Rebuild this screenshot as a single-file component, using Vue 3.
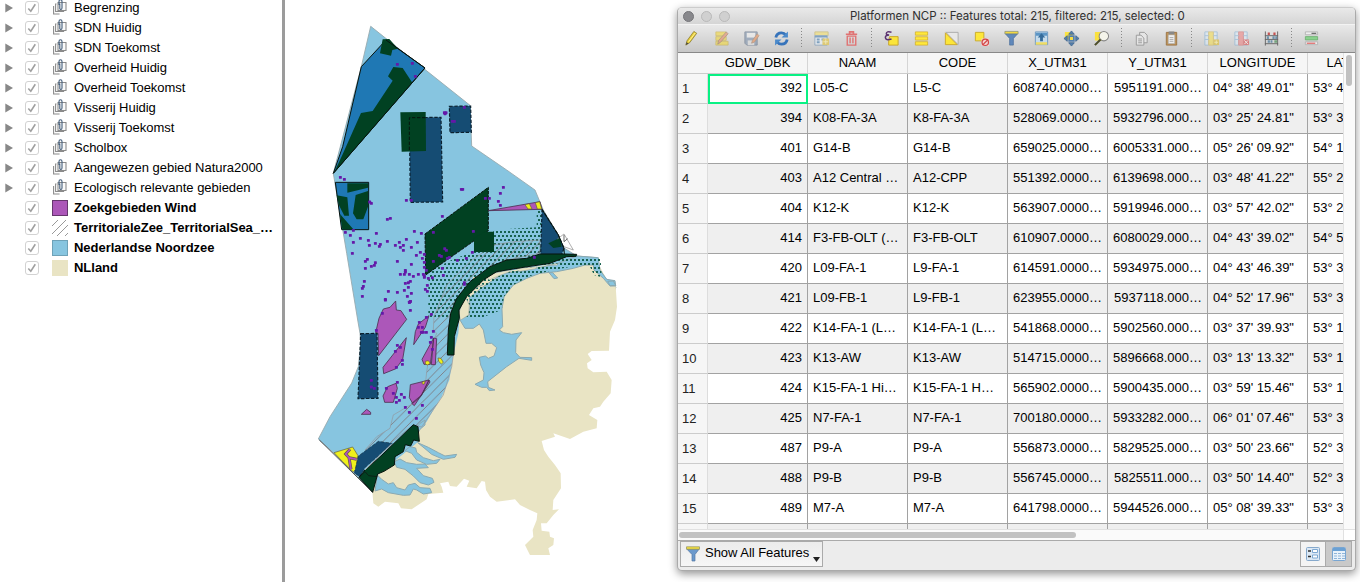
<script setup>
const layers = [
  'Begrenzing', 'SDN Huidig', 'SDN Toekomst', 'Overheid Huidig', 'Overheid Toekomst',
  'Visserij Huidig', 'Visserij Toekomst', 'Scholbox', 'Aangewezen gebied Natura2000',
  'Ecologisch relevante gebieden',
].map((name) => ({ name, group: true })).concat([
  { name: 'Zoekgebieden Wind', swatch: 'wind' },
  { name: 'TerritorialeZee_TerritorialSea_…', swatch: 'territory' },
  { name: 'Nederlandse Noordzee', swatch: 'sea' },
  { name: 'NLland', swatch: 'land' },
])

const columns = ['GDW_DBK', 'NAAM', 'CODE', 'X_UTM31', 'Y_UTM31', 'LONGITUDE', 'LATITUDE']
const rows = [
  ['392', 'L05-C', 'L5-C', '608740.0000…', '5951191.000…', '04° 38\' 49.01"', '53° 4'],
  ['394', 'K08-FA-3A', 'K8-FA-3A', '528069.0000…', '5932796.000…', '03° 25\' 24.81"', '53° 3'],
  ['401', 'G14-B', 'G14-B', '659025.0000…', '6005331.000…', '05° 26\' 09.92"', '54° 1'],
  ['403', 'A12 Central …', 'A12-CPP', '551392.0000…', '6139698.000…', '03° 48\' 41.22"', '55° 2'],
  ['404', 'K12-K', 'K12-K', '563907.0000…', '5919946.000…', '03° 57\' 42.02"', '53° 2'],
  ['414', 'F3-FB-OLT (…', 'F3-FB-OLT', '610907.0000…', '6080029.000…', '04° 43\' 39.02"', '54° 5'],
  ['420', 'L09-FA-1', 'L9-FA-1', '614591.0000…', '5934975.000…', '04° 43\' 46.39"', '53° 3'],
  ['421', 'L09-FB-1', 'L9-FB-1', '623955.0000…', '5937118.000…', '04° 52\' 17.96"', '53° 3'],
  ['422', 'K14-FA-1 (L…', 'K14-FA-1 (L…', '541868.0000…', '5902560.000…', '03° 37\' 39.93"', '53° 1'],
  ['423', 'K13-AW', 'K13-AW', '514715.0000…', '5896668.000…', '03° 13\' 13.32"', '53° 1'],
  ['424', 'K15-FA-1 Hi…', 'K15-FA-1 H…', '565902.0000…', '5900435.000…', '03° 59\' 15.46"', '53° 1'],
  ['425', 'N7-FA-1', 'N7-FA-1', '700180.0000…', '5933282.000…', '06° 01\' 07.46"', '53° 3'],
  ['487', 'P9-A', 'P9-A', '556873.0000…', '5829525.000…', '03° 50\' 23.66"', '52° 3'],
  ['488', 'P9-B', 'P9-B', '556745.0000…', '5825511.000…', '03° 50\' 14.40"', '52° 3'],
  ['489', 'M7-A', 'M7-A', '641798.0000…', '5944526.000…', '05° 08\' 39.33"', '53° 3'],
  ['', '', '', '', '', '', ''],
]

// Platform positions, grouped per map sheet: [sheet x, sheet y, pairs in 1/3 px]
const sheets = [
  [310, 20, [262, 133, 307, 130, 316, 169, 403, 278, 408, 278, 405, 281, 463, 262, 427, 304, 433, 304]],
  [310, 170, [91, 22, 103, 28, 179, 96, 184, 100, 289, 91, 304, 91, 454, 58, 458, 58, 526, 85, 538, 85, 397, 139,
    232, 148, 241, 145, 130, 181, 106, 187, 121, 196, 151, 205, 130, 217, 199, 190, 175, 211, 178, 226, 196, 220,
    211, 223, 208, 229, 232, 214, 256, 226, 268, 217, 271, 232, 280, 226, 280, 241, 289, 208, 313, 184, 334, 190,
    370, 187, 322, 217, 304, 232, 490, 184, 127, 250, 172, 268, 166, 274, 166, 295, 184, 289, 193, 286, 196, 278,
    262, 274, 319, 256, 331, 247, 337, 265, 343, 253, 304, 283, 343, 277, 343, 292, 370, 274, 388, 256, 394, 259,
    404, 236, 409, 241, 412, 265, 418, 262, 442, 271, 469, 265, 487, 247, 397, 295, 400, 316, 286, 301, 286, 306,
    271, 313, 283, 313, 298, 313, 310, 319, 325, 313, 340, 313, 343, 318, 355, 325, 367, 323, 349, 301, 343, 322,
    163, 334, 160, 349, 157, 355, 157, 379, 235, 364, 226, 388, 262, 367, 283, 361, 286, 340, 295, 338, 301, 334,
    295, 352, 304, 370, 292, 379, 298, 397, 301, 394, 301, 421, 352, 346, 346, 358, 352, 364, 349, 442, 364, 433,
    463, 338, 463, 343, 217, 430]],
  [430, 170, [220, 52, 211, 70, 205, 94, 211, 106, 313, 262]],
  [310, 300, [298, 7, 301, 4, 226, 0, 199, 91, 328, 67, 325, 82, 337, 82, 334, 97, 340, 97, 349, 97, 370, 94, 364, 112,
    361, 127, 367, 148, 262, 136, 271, 142, 256, 154, 277, 181, 277, 193, 259, 202, 262, 247, 229, 265, 250, 280,
    274, 283, 283, 292, 259, 292, 268, 301, 259, 307, 286, 322, 298, 337, 319, 355, 337, 316, 184, 241, 184, 261,
    193, 265]],
]
const platforms = sheets.flatMap(([ox, oy, list]) => {
  const points = []
  for (let i = 0; i < list.length; i += 2) points.push([ox + list[i] / 3, oy + list[i + 1] / 3])
  return points
})
</script>

<template>
  <main class="screen">
    <aside class="legend">
      <div v-for="layer in layers" :key="layer.name" class="layer" :class="{ bold: !layer.group }">
        <span class="arrow"><svg v-if="layer.group" width="9" height="10" viewBox="0 0 9 10"><path d="M.3.5 8 5 .3 9.5z" fill="#888" /></svg></span>
        <span class="check"><svg width="12" height="12" viewBox="0 0 12 12"><path d="M2.3 6.5 4.8 9.2 9.3 2.3" fill="none" stroke="#a0a0a0" stroke-width="1.6" /></svg></span>
        <span class="symbol">
          <svg v-if="layer.group" width="14" height="16" viewBox="0 0 14 16" fill="none">
            <path d="M.6 7v8h6M3.5 5H2.6v7.5h8V11" stroke="#8b8b8b" stroke-width="1.1" />
            <path d="M5 3.5h8v8H5z" fill="#fafafa" stroke="#8b8b8b" stroke-width="1.1" />
            <path d="M6 6V2.5Q6 .8 7.5.8T9 2.5V9Q9 10.4 7.8 10.4T6.8 9V4.5" stroke="#435e7c" stroke-width="1.1" />
          </svg>
          <i v-else class="swatch" :class="layer.swatch">
            <svg v-if="layer.swatch === 'territory'" width="16" height="16"><path d="M0 6 6 0M0 14 14 0M5 16 16 5M13 16l3-3" stroke="#999" /></svg>
          </i>
        </span>
        <span class="name">{{ layer.name }}</span>
      </div>
    </aside>

    <section class="map">
      <svg width="391" height="582" viewBox="285 0 391 582">
        <defs>
          <pattern id="dots" width="12" height="24" patternUnits="userSpaceOnUse">
            <path d="M0 3h6v6H0zM6 15h6v6H6z" fill="#16614f" />
          </pattern>
          <pattern id="hatch" width="8.5" height="8.5" patternUnits="userSpaceOnUse">
            <path d="M-1 9.5 9.5-1" stroke="#7b6f72" stroke-width=".8" />
          </pattern>
        </defs>

        <path class="sea" d="M370.7 26.3 470 105.3 471.7 146 506.7 170 535 190 543.3 210 558.3 235 564 248 577 256 596.7 257.7 601.7 275 616 287 600 330 500 400 420 500 372.7 492.3 333.3 452.7 318.3 439 330 416.7 351.7 383 358.3 366.7 360.7 343 360 333.3 357.7 320 346.7 253.3 333.3 173.3 361.3 66.7z" />

        <!-- mainland, lakes and estuaries -->
        <g transform="translate(440 300) scale(.33333)">
          <path class="land" d="M100-70 410-120 480-100 500-62 516-42 527-42 531 20 525 60 510 95 507 152 455 153 443 162 455 180 441 190 443 205 460 217 500 215 515 240 512 280 490 305 480 320 460 325 447 345 472 360 470 385 430 395 390 417 340 400 345 410 305 423 312 450 325 470 345 495 362 520 363 565 340 600 338 630 357 628 340 645 320 670 303 670 305 692 328 695 330 710 342 715 340 735 325 745 330 765 270 765 265 755 255 735 280 710 278 690 290 660 292 640 270 630 240 615 225 598 170 605 150 590 138 570 135 545 125 543 110 565 80 560 88 542 72 536 50 560 30 558 25 545 0 550 5 560 10 578-35 582-40 598-85 628-117 625-125 610-165 605-185 620-200 610-203 575-187 525-65 425-70 395-40 365-20 330 5 290 28 240 40 165 55 100 58 60 75 0z" />
          <path class="water" d="M90 15 88 45 60 60 75 85 100 85 118 72 130 90 138 130 155 130 170 143 162 168 145 175 136 168 118 172 122 195 132 218 130 240 105 253 125 262 140 262 148 272 165 270 145 262 143 245 200 200 237 175 275 181 275 173 240 172 227 158 228 120 245 98 215 103 190 98 178 90 188 80 186 27 192-10 220-45 260-65 300-80 350-85 400-95 435-105 460-105 462-90 490-65 510-42 527-42 525-58 500-62 480-90 475-127 410-132 350-108 250-88 190-80 130-40 88-7z" />
          <path class="water" d="M327-82 342-64 353-66 338-82z" />
        </g>
        <g transform="translate(365 420) scale(.33333)">
          <path class="water" d="M37 165 50 178 70 192 85 188 95 203 120 210 130 195 150 190 165 203 195 205 200 218 175 222 155 210 145 207 135 225 115 226 70 218 50 207 30 213z" />
          <path class="water" d="M88 125 105 117 125 128 155 133 180 132 190 143 155 145 175 167 202 175 207 187 190 195 165 188 145 168 120 148 95 142z" />
          <path class="water" d="M120 92 135 80 152 84 155 97 175 113 205 122 225 118 215 130 185 133 155 120 140 100z" />
          <path class="water" d="M158 68 190 82 220 98 240 108 275 103 270 112 235 118 200 103 180 86z" />
          <path class="water" d="M145 28 155 23 165 10 180 0 180 15 165 28 160 38z" />
        </g>

        <!-- protected and fishery areas -->
        <g transform="translate(430 170) scale(.33333)">
          <path fill="url(#dots)" d="M-5 290 35 285 75 265 135 245 190 245 190 180 320 172 320 120 335 120 335 255 400 255 450 262 512 265 515 322 492 315 480 290 440 287 370 300 300 318 250 345 222 380 215 420 150 445-5 445z" />
          <path class="land thin" d="M105 378 118 405 116 435 92 450 86 430zM112 372 125 358 160 344 145 350zM170 322 190 310 240 300 242 304 200 320 178 330zM255 296 320 290 318 296 270 304zM350 285 385 281 380 286z" />
        </g>
        <path fill="url(#hatch)" stroke="#929aa0" stroke-width=".7" d="M433.3 330 434 316.7 446.7 285 470 261.7 493.3 245 513.3 241.7 540 240 540 253.3 506.7 260 460 293.3 450 313.3 448 355 453.3 355 451.7 367 443.3 395 421.7 427 413.3 425 390 443.3 365 450 376.7 436.7 390 428.3 393.3 415 413.3 403.3 425 388.3 426.7 371.7 430 350 436.7 333.3z" />
        <g transform="translate(310 20) scale(.33333)">
          <path fill="#1f78b4" class="edge" d="M154 140 228 60 345 144 70 460 98 380z" />
          <path class="green" d="M218 58 238 57 264 86 247 90 243 107 210 100zM250 141 278 144 307 188 72 458 98 403 153 279 188 273 248 182 234 169z" />
          <path class="edge" fill="none" d="M228 60 345 144 70 460" />
          <path class="navy" d="M418 259 482 258 484 337 420 338zM298 293 393 292 398 546 301 547z" />
          <path class="green" d="M271 277 347 276 348 393 275 395z" />
          <path class="dash" d="M298 390V293H350" />
        </g>
        <g transform="translate(310 170) scale(.33333)">
          <path fill="#1f78b4" class="edge" d="M76 37H176V179H95z" />
          <path class="green" d="M112 40H174V53L112 68zM80 76 112 82 117 137H103L88 108zM137 75 174 63V110L160 148H140L129 130zM90 132 130 178H97z" />
          <path class="green dashed" d="M345 192 535 52V182L347 315z" />
        </g>
        <g transform="translate(430 170) scale(.33333)">
          <path class="green" d="M132 205 165 185H192V246H132z" />
          <path class="navy" d="M336 118 385 195 402 235 395 254H332z" />
          <path class="green" d="M355 220 390 203 395 230 370 234z" />
          <path class="wind" d="M175 122 330 95 336 118z" />
          <path fill="#eff01c" stroke="#625a3a" stroke-width="2" d="M285 104 298 101 306 117H294zM316 98 329 95 335 117H322z" />
          <path d="M382 207 402 192 430 240 402 230" fill="none" stroke="#888" stroke-width="2" />
          <path d="M402 195V215L413 206" fill="none" stroke="#222" stroke-width="2" />
          <path class="green edge" d="M440 253 400 252 330 252 290 265 230 270 180 290 120 335 80 385 62 430 55 480 52 555 72 555 73 500 88 445 87 420 110 380 160 330 200 305 280 292 360 280 410 260 438 259z" />
          <path fill="none" class="edge" d="M336 118 385 195 402 235 403 252" />
          <path class="water" d="M533 334 550 333 557 346 540 347z" />
        </g>

        <!-- wind farm search areas and southern delta -->
        <g transform="translate(310 300) scale(.33333)">
          <path class="wind" d="M197 98 207 55 220 27 240 22 257 3 259 30 273 32 290 58 206 167 204 100zM289 113 278 178 258 206 221 221 219 202zM357 47 346 82 311 134 316 95 325 72zM371 114 361 193H342L336 178zM371 114 380 116 376 194H364zM258 250 262 265 250 307H224L219 288 233 260zM301 254 357 240 332 290 308 310 298 293zM357 240 360 246 313 317 305 310 336 284zM154 343 170 328 182 337V343z" />
          <path fill="#eff01c" stroke="#625a3a" stroke-width="2" d="M346 184 355 182 361 190 352 195 346 192zM384 174 393 175 400 187 394 192 386 184zM337 246 346 243 342 253 336 251zM72 458 128 441 144 467 137 508 130 516 98 485z" />
          <path d="M120 448 107 462 117 473 140 478M117 473 123 508" fill="none" stroke="#625a3a" stroke-width="9" />
          <path d="M120 448 107 462 117 473 140 478M117 473 123 508" fill="none" stroke="#ac57b9" stroke-width="5.5" />
          <path class="navy" d="M152 101 201 100 204 295 144 296z" />
          <path class="navy plain" d="M133 520 145 468 205 424 247 430 165 503 150 530z" />
          <path class="green edge" d="M310 374 324 380 328 424 311 420 302 438 286 434 280 455 255 470 253 495 222 514 203 522 188 577 147 532 165 510 216 465z" />
          <path d="M147 532 165 515 176 527 202 530M28 420 188 577" fill="none" stroke="#111" stroke-width="2" />
          <path d="M165 510 245 432" fill="none" stroke="#a4a4a4" stroke-width="3" />
        </g>

        <rect v-for="(p, i) in platforms" :key="i" :x="p[0] - 1.4" :y="p[1] - 1.4" width="2.9" height="2.9" rx=".6" fill="#6419a8" />
      </svg>
    </section>

    <section class="window">
      <header class="titlebar">
        <span class="light dark"></span><span class="light"></span><span class="light"></span>
        <h1>Platformen NCP :: Features total: 215, filtered: 215, selected: 0</h1>
      </header>

      <nav class="toolbar">
        <span class="tool"><svg viewBox="0 0 18 18"><path d="m3 16 1.2-4.5L11.5 1.5l3 2L7 13.5z" fill="#e9cf3b" stroke="#86772c" stroke-width=".8" /><path d="m6 12.5 7-9.5" stroke="#fff29a" /><path d="m3 16 .8-3 2 1.3z" fill="#444" /></svg></span>
        <span class="tool faded"><svg viewBox="0 0 18 18"><path d="M3 2h11v4H3zM3 7h11v4H3zM3 12h13v4H3z" fill="#f3d93c" stroke="#c4a628" stroke-width=".7" /><path d="m5 15 1-4 8-9 2 2-8 9z" fill="#e78960" stroke="#8a6a4c" stroke-width=".8" /></svg></span>
        <span class="tool faded"><svg viewBox="0 0 18 18"><path d="M2 2h13v14H4l-2-2z" fill="#7c91ac" stroke="#5c6c84" /><path d="M4 3h9v5H4z" fill="#eee" /><path d="M5 11h7v5H5z" fill="#ddd" /><path d="m9 14 1-3 5-7 2 2-5 7z" fill="#e58b55" stroke="#8b674c" stroke-width=".6" /></svg></span>
        <span class="tool"><svg viewBox="0 0 18 18"><path d="M3 8Q4 3 9 3q3 0 4.5 2.3M15 10q-1 5-6 5-3 0-4.5-2.3" fill="none" stroke="#3774bb" stroke-width="3" /><path d="M15.8 1.5V8H9zM2.2 16.5V10H9z" fill="#4b8acb" /></svg></span>
        <i class="sep"></i>
        <span class="tool faded"><svg viewBox="0 0 18 18"><path d="M2 2h14v4H2z" fill="#f4df68" stroke="#c4b35d" /><path d="M2 6h13v10H2z" fill="#eef5fb" stroke="#6b91b4" /><path d="M2 7h13M4 10h3m2 0h3M4 13h3" stroke="#477fb1" stroke-width="2" /><path d="M10 9h7v7h-7z" fill="#e5c337" /><path d="M11 12.5h5m-2.5-2.5v5" stroke="#fff6b0" /></svg></span>
        <span class="tool"><svg viewBox="0 0 18 18" fill="none" stroke="#e07373"><path d="M3 4.5h12M7 4V2h4v2" stroke-width="1.8" /><path d="M4.5 6.5h9v9.5h-9zM7.5 8v6m3-6v6" stroke-width="1.5" /></svg></span>
        <i class="sep"></i>
        <span class="tool"><svg viewBox="0 0 18 18"><path d="M7 7h9v9H6v-5z" fill="#fbe53a" stroke="#c7a52b" /><path d="M9 2.3Q3.5.8 3.5 4 3.5 5.2 6.5 5.2 2.5 5.2 2.5 8q0 3.5 6.5 1.5" fill="none" stroke="#5d3470" stroke-width="1.6" /></svg></span>
        <span class="tool"><svg viewBox="0 0 18 18" fill="#ffe83b" stroke="#d3af27" stroke-width=".8"><path d="M2.5 2h13v3.5h-13zM2.5 7.2h13v3.5h-13zM2.5 12.4h13V16h-13z" /></svg></span>
        <span class="tool"><svg viewBox="0 0 18 18"><path d="M3 2.5h13v13z" fill="#e7e7e7" stroke="#aaa" /><path d="M2.5 3v12.5H15z" fill="#fce638" stroke="#cda92a" /></svg></span>
        <span class="tool"><svg viewBox="0 0 18 18"><path d="M2.5 2.5h9v9h-9z" fill="#fde73a" stroke="#caaa2a" /><path d="M9 9h8v8H9z" fill="#f5d4d4" /><circle cx="13" cy="13" r="3.4" fill="none" stroke="#d34646" stroke-width="1.3" /><path d="m10 16 6-6" stroke="#d34646" stroke-width="1.3" /></svg></span>
        <span class="tool"><svg viewBox="0 0 18 18"><path d="M2.5 4h13L11 9v7H7V9z" fill="#6089bb" stroke="#486b97" stroke-width=".7" /><path d="M2 1.5h14V4H2z" fill="#f2d941" stroke="#7e8a78" stroke-width=".7" /></svg></span>
        <span class="tool"><svg viewBox="0 0 18 18"><path d="M2.5 2h13v13.5h-13z" fill="#c6dcec" stroke="#6c9ac1" /><path d="M3 3h12v3H3z" fill="#5b95c5" /><path d="M3 13h12v2.5H3z" fill="#f1dd62" /><path d="M9 3.5 13 8h-2.5v4h-3V8H5z" fill="#356c9b" /></svg></span>
        <span class="tool"><svg viewBox="0 0 18 18"><path d="M2 2h8v8H2z" fill="#fce443" /><path d="M9 1 12 4.5H6zM9 17l3-3.5H6zM1 9l3.5-3v6zM17 9l-3.5-3v6z" fill="#557fac" stroke="#385f8c" stroke-width=".8" /><path d="M6.5 6.5h5v5h-5z" fill="#f4dc48" stroke="#557fac" stroke-width="1.8" /></svg></span>
        <span class="tool"><svg viewBox="0 0 18 18"><path d="M2 2h8v9H2z" fill="#fbe13e" /><circle cx="11.5" cy="6.5" r="5" fill="#f4f4ea" stroke="#888" stroke-width="1.1" /><path d="m8 10-6 6" stroke="#4d4d2a" stroke-width="2.2" /></svg></span>
        <i class="sep"></i>
        <span class="tool"><svg viewBox="0 0 18 18" fill="#e5e5e5" stroke="#999"><path d="M7 2.5h5l3 3v8H7z" /><path d="M3.5 5.5h5l3 3V16h-8zM5.5 9.5h4m-4 2h4m-4 2h4" /></svg></span>
        <span class="tool"><svg viewBox="0 0 18 18"><path d="M3.5 2.5h11v13.5h-11z" fill="#c09559" stroke="#9c7546" /><path d="M5.5 5h7v9.5h-7z" fill="#eee" stroke="#999" stroke-width=".6" /><path d="M6 1.5h6v3H6z" fill="#888" /><path d="M7 8h4m-4 2h4m-4 2h4" stroke="#aaa" /></svg></span>
        <i class="sep"></i>
        <span class="tool faded"><svg viewBox="0 0 18 18"><path d="M2 2h4v14H2zM11 2h4v14h-4z" fill="#dcecf9" stroke="#88b3d5" /><path d="M6 2h5v14H6z" fill="#f5df56" stroke="#d2b85a" /><path d="M2 6h4m-4 4h4m5-4h4" stroke="#88b3d5" /><path d="M11 10h6v6h-6z" fill="#e0bd2f" /><path d="M12 13h4m-2-2v4" stroke="#fff8a5" /></svg></span>
        <span class="tool faded"><svg viewBox="0 0 18 18"><path d="M2 2h4v14H2zM11 2h4v14h-4z" fill="#dcecf9" stroke="#88b3d5" /><path d="M6 2h5v14H6z" fill="#ef8686" stroke="#d47070" /><path d="M2 6h4m-4 4h4m5-4h4" stroke="#88b3d5" /><path d="M11 10h6v6h-6z" fill="#dc5050" /><path d="m12 11 4 4m0-4-4 4" stroke="#fff" /></svg></span>
        <span class="tool"><svg viewBox="0 0 18 18"><path d="M2.5 1.5v15m13-15v15M2 6h14M2 10h14M2 14.5h14" fill="none" stroke="#666" /><g stroke-width="2.8"><path d="M5 4h3m3 0h3" stroke="#c65151" stroke-dasharray="2.3 .7" /><path d="M4 8h3m3 0h5M5 12.2h5" stroke="#6e91aa" stroke-dasharray="2.3 .7" /><path d="M12 12.2h3" stroke="#73a37c" /></g></svg></span>
        <i class="sep"></i>
        <span class="tool"><svg viewBox="0 0 18 18"><path d="M2.5 2h13v3h-13zM2.5 12.5h13v3h-13z" fill="#eee" stroke="#aaa" stroke-width=".8" /><path d="M2.5 7h13v3.5h-13z" fill="#8bd28e" stroke="#68aa6c" stroke-width=".8" /><path d="M9 3.5h5" stroke="#444" /><path d="M4 14h9" stroke="#df4545" /></svg></span>
      </nav>

      <div class="body">
        <div class="table">
          <div class="row head">
            <span class="index"></span>
            <span v-for="c in columns" :key="c" class="th">{{ c }}</span>
          </div>
          <div v-for="(r, i) in rows" :key="i" class="row" :class="{ alt: i % 2 }">
            <span class="index">{{ i < 15 ? i + 1 : '' }}</span>
            <span v-for="(v, j) in r" :key="j" class="cell" :class="{ right: j === 0 || j === 3 || j === 4, current: i === 0 && j === 0 }">{{ v }}</span>
          </div>
        </div>
        <div class="vscroll"><i></i></div>
      </div>
      <div class="hscroll"><i></i><b></b></div>

      <footer class="bottom">
        <button class="filter">
          <svg width="14" height="16" viewBox="0 0 14 16"><path d="M.8 3h12.4L9 8.5V15H6V8.5z" fill="#6b99cc" stroke="#5579a5" stroke-width=".7" /><path d="M.5.8h13v2.4H.5z" fill="#f5e13e" stroke="#8b8c61" stroke-width=".7" /></svg>
          <span>Show All Features</span>
          <svg class="caret" width="7" height="5" viewBox="0 0 7 5"><path d="M0 0h7L3.5 5z" fill="#222" /></svg>
        </button>
        <div class="views">
          <span class="view"><svg width="14" height="14" viewBox="0 0 14 14"><rect x=".5" y=".5" width="13" height="13" rx="1" fill="#dbe8f5" stroke="#86a9cc" /><path d="M2 4h3M2 9.5h3" stroke="#333" stroke-width="1.3" /><path d="M6.5 2.5h5v3h-5zM6.5 8h5v3h-5z" fill="#fff" stroke="#7da8d2" /></svg></span>
          <span class="view on"><svg width="14" height="14" viewBox="0 0 14 14"><rect x=".5" y=".5" width="13" height="13" rx="1" fill="#e9f2fa" stroke="#79a6d2" /><path d="M1 1h12v3H1z" fill="#6ba1d4" /><path d="M2 6.5h3m1 0h3m1 0h3M2 9h3m1 0h3m1 0h3M2 11.5h3m1 0h3m1 0h3" stroke="#8fb5d9" /></svg></span>
        </div>
      </footer>
    </section>
  </main>
</template>

<style>
body { background: #fff; overflow: hidden; }
</style>

<style scoped>
* { box-sizing: border-box; }
.screen { display: flex; width: 1360px; height: 582px; overflow: hidden; background: #fff; color: #000; font: 13px "Liberation Sans", Arial, sans-serif; }
.legend { width: 285px; flex: none; border-right: 3px solid #9b9b9b; margin-top: -2px; height: 584px; }
.layer { display: flex; align-items: center; height: 20px; }
.arrow { width: 25px; padding: 0 0 0 5px; height: 20px; display: flex; align-items: center; }
.check { width: 14px; height: 14px; border: 1px solid #d2d2d2; border-radius: 3px; display: flex; }
.symbol { width: 35px; padding-left: 13px; display: flex; }
.symbol > svg { margin-left: 1px; margin-top: -2px; }
.name { white-space: nowrap; line-height: 20px; letter-spacing: -.02px; }
.bold { font-weight: bold; }
.swatch { display: block; width: 16px; height: 16px; border: 1px solid #66366e; background: #ac57b9; }
.swatch.territory { background: #fff; border: 0; }
.swatch.sea { background: #87c5e0; border-color: #6ea2b8; }
.swatch.land { background: #e9e4c4; border: 0; }
.map { width: 391px; flex: none; height: 582px; }
.sea { fill: #87c5e0; stroke: #98aaaf; stroke-width: .9; }
.land { fill: #e9e4c4; }
.thin { stroke: #9dafad; stroke-width: 2; }
.water { fill: #87c5e0; stroke: #8ba9b1; stroke-width: 3; stroke-linejoin: round; }
.green { fill: #014122; }
.edge { stroke: #07130d; stroke-width: 3; }
.dashed { stroke: #07130d; stroke-width: 3; stroke-dasharray: 10 3; }
.navy { fill: #154c73; stroke: #0b202e; stroke-width: 3.5; stroke-dasharray: 10 5; }
.plain { stroke-width: 1.5; }
.dash { fill: none; stroke: #07130d; stroke-width: 3; stroke-dasharray: 10 5; }
.wind { fill: #ac57b9; stroke: #4d3051; stroke-width: 2.5; }

.window { width: 679px; height: 564px; margin: 7px 0 0 1px; flex: none; display: flex; flex-direction: column; border: 1px solid #aaa; border-top-color: #ccc; border-radius: 5px; background: #ececec; box-shadow: 0 3px 9px rgba(0, 0, 0, .42); overflow: hidden; }
.titlebar { height: 16px; flex: none; display: flex; align-items: center; gap: 7px; padding-left: 5px; background: linear-gradient(#e9e9e9, #d5d5d5); }
.light { width: 11px; height: 11px; border: 1px solid #b9b9b9; border-radius: 50%; background: #d0d0d0; flex: none; }
.light.dark { background: #88888c; border-color: #747478; }
h1 { font: 11.5px/15px Inter, Roboto, sans-serif; letter-spacing: 0; margin: 0 0 0 113px; color: #303030; white-space: nowrap; }
.toolbar { height: 29px; flex: none; display: flex; margin-left: -2px; background: linear-gradient(#e9e9e9, #c7c7c7); border-top: 1px solid #f3f3f3; border-bottom: 1px solid #888; }
.tool { width: 30px; display: flex; align-items: center; justify-content: center; flex: none; }
.tool svg { width: 17px; height: 17px; }
.faded { opacity: .6; }
.sep { width: 10px; flex: none; margin: 3px 0; background: repeating-linear-gradient(#888 0 1px, transparent 1px 3px) 5px 0 / 1px 100% no-repeat; }
.body { display: flex; height: 476px; flex: none; background: #fff; }
.table { width: 665px; flex: none; overflow: hidden; }
.row { display: flex; width: 730px; height: 30px; background: #fff; }
.row.alt { background: #efefef; }
.row.head { height: 21px; background: #f6f6f6; border-bottom: 1px solid #ccc; }
.index { width: 30px; flex: none; padding-left: 4px; line-height: 29px; background: #f6f6f6; border-bottom: 1px solid #ccc; border-right: 1px solid #ddd; color: #222; }
.head .index { border: 0; }
.th { width: 100px; flex: none; text-align: center; line-height: 20px; border-right: 1px solid #d5d5d5; }
.cell { width: 100px; flex: none; padding: 0 5px; line-height: 28px; border-right: 1px solid #a2a2a2; border-bottom: 1px solid #a2a2a2; white-space: nowrap; overflow: hidden; }
.right { text-align: right; }
.current { border: 2px solid #09f184; padding-right: 4px; line-height: 24px; }
.vscroll { flex: 1; background: #fafafa; border-left: 1px solid #e3e3e3; padding: 2px 0 0 2px; }
.vscroll i { display: block; width: 6px; height: 31px; border-radius: 3px; background: #c1c1c1; }
.hscroll { height: 12px; flex: none; display: flex; align-items: center; justify-content: space-between; background: #fafafa; border-top: 1px solid #e1e1e1; border-bottom: 1px solid #aaa; }
.hscroll i { width: 397px; height: 6px; border-radius: 3px; background: #c1c1c1; margin-left: 1px; }
.hscroll b { width: 12px; height: 10px; background: #fff; border-left: 1px solid #e1e1e1; }
.bottom { flex: 1; display: flex; justify-content: space-between; align-items: flex-start; padding: 0 3px 0 2px; }
.filter { width: 143px; height: 26px; display: flex; align-items: center; margin: 0; padding: 0 0 0 5px; border: 1px solid #aaa; background: linear-gradient(#ececec, #f6f6f6); font: 13px "Liberation Sans", Arial, sans-serif; color: #000; }
.filter span { margin: -4px 4px 0 5px; white-space: nowrap; letter-spacing: -.03px; }
.caret { margin-top: 11px; }
.views { display: flex; }
.view { width: 26px; height: 26px; display: flex; align-items: center; justify-content: center; border: 1px solid #aaa; background: #f4f4f4; }
.view.on { border-left: 0; background: #c9c9c9; }
</style>
